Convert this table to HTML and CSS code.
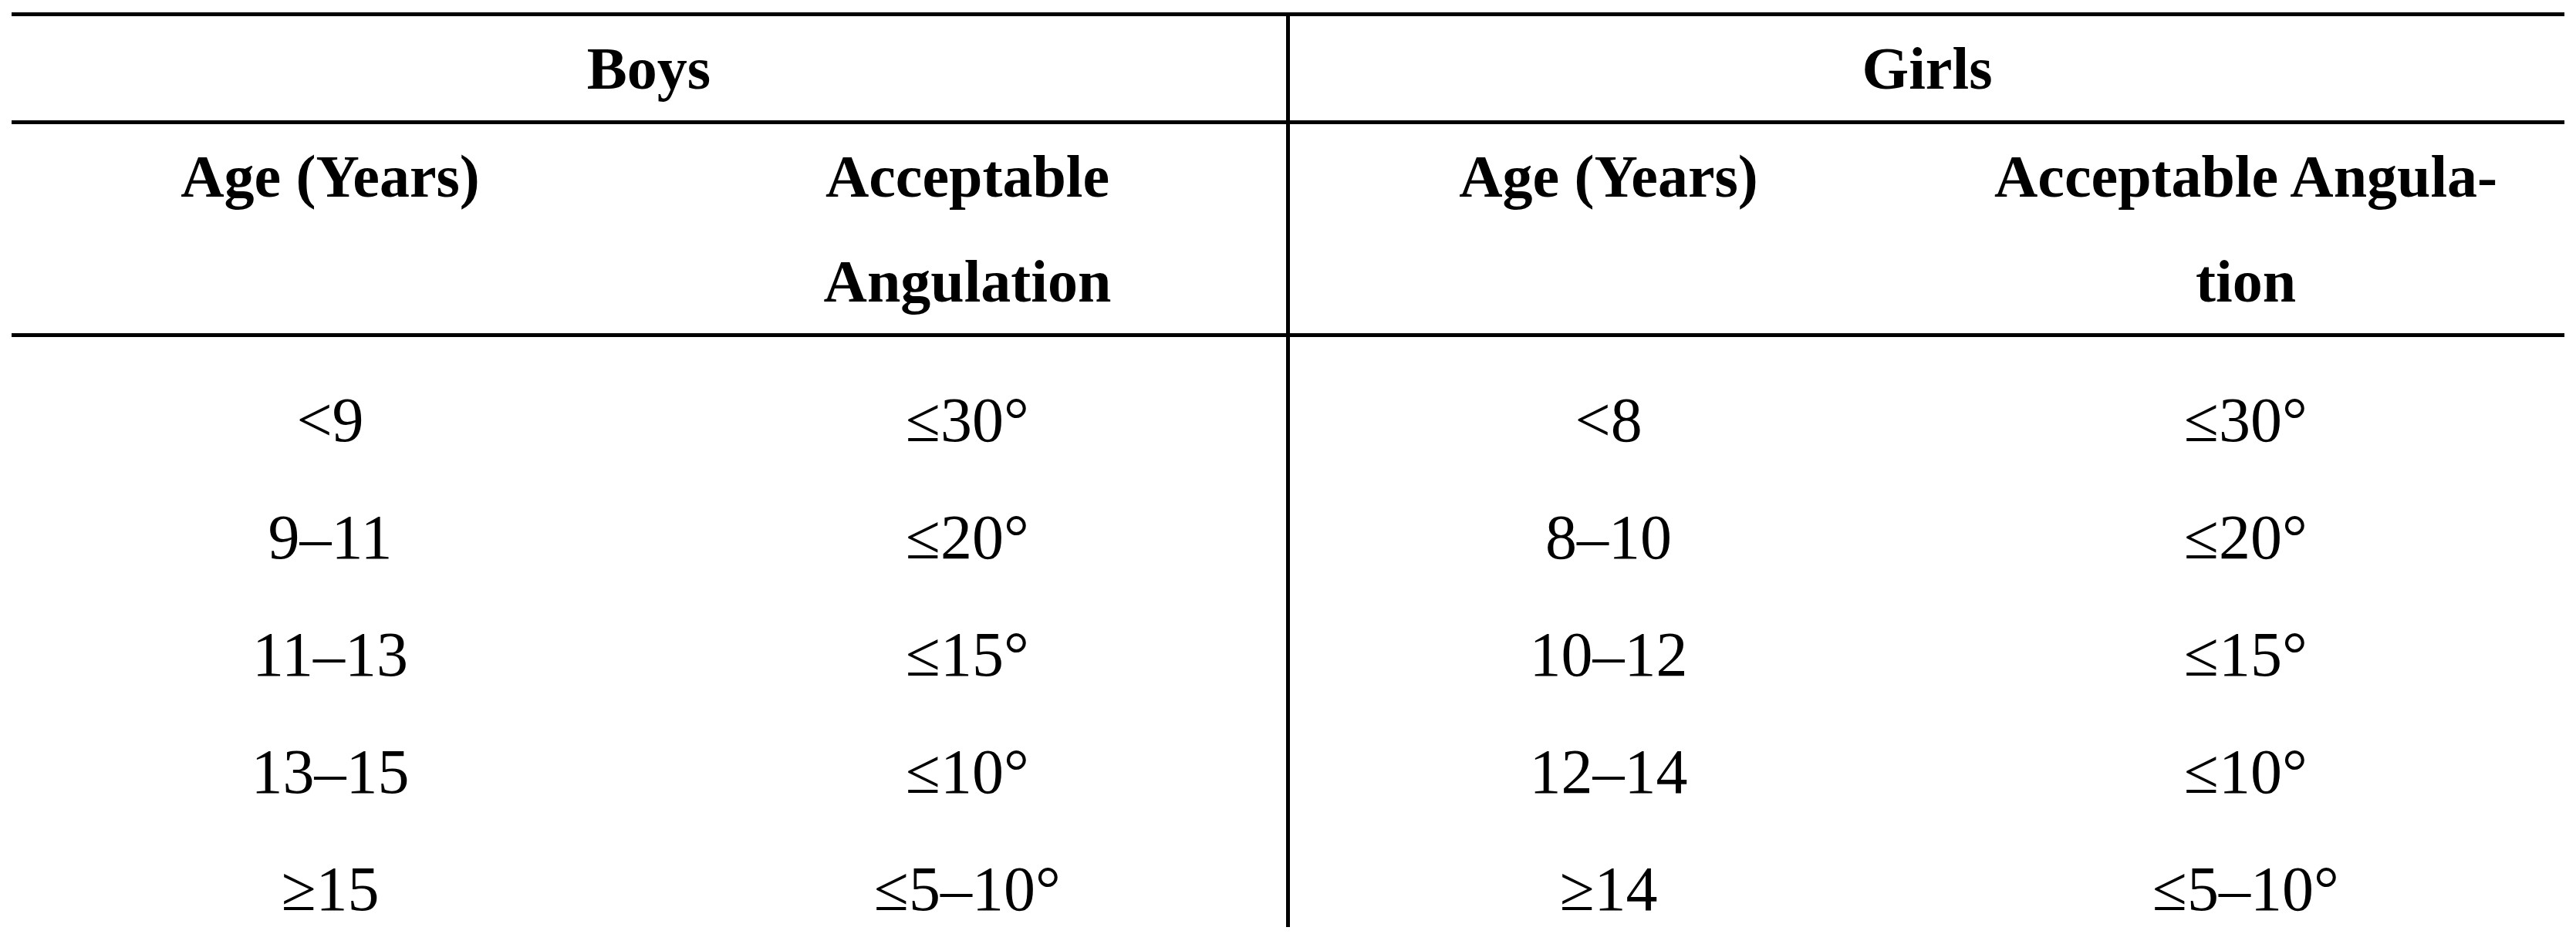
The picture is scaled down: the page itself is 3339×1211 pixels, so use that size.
FILE: index.html
```html
<!DOCTYPE html>
<html lang="en">

<head>
  <meta charset="UTF-8">
  <meta name="viewport" content="width=device-width, initial-scale=1.0">
  <title>Acceptable Angulation by Age</title>
  <link rel="stylesheet" href="styles.css">
</head>

<body>
  <div class="sheet">
    <table class="angles">
      <colgroup>
        <col class="col-age">
        <col class="col-angle">
        <col class="col-split">
        <col class="col-angle">
      </colgroup>
      <thead>
        <tr class="group-row">
          <th colspan="2">Boys</th>
          <th colspan="2" class="split">Girls</th>
        </tr>
        <tr class="label-row">
          <th>Age (Years)</th>
          <th>Acceptable<br>Angulation</th>
          <th class="split">Age (Years)</th>
          <th>Acceptable Angula-<br>tion</th>
        </tr>
      </thead>
      <tbody>
        <tr>
          <td>&lt;9</td>
          <td>≤30°</td>
          <td class="split">&lt;8</td>
          <td>≤30°</td>
        </tr>
        <tr>
          <td>9–11</td>
          <td>≤20°</td>
          <td class="split">8–10</td>
          <td>≤20°</td>
        </tr>
        <tr>
          <td>11–13</td>
          <td>≤15°</td>
          <td class="split">10–12</td>
          <td>≤15°</td>
        </tr>
        <tr>
          <td>13–15</td>
          <td>≤10°</td>
          <td class="split">12–14</td>
          <td>≤10°</td>
        </tr>
        <tr>
          <td>≥15</td>
          <td>≤5–10°</td>
          <td class="split">≥14</td>
          <td>≤5–10°</td>
        </tr>
      </tbody>
    </table>
  </div>
</body>

</html>
```

FILE: styles.css
```css
* {
  margin: 0;
  padding: 0;
  box-sizing: border-box;
}

body {
  background: #fff;
  color: #000;
}

/* the table is cropped at the bottom, like the original figure */
.sheet {
  height: 1202px;
  padding: 16px 15px 0;
  overflow: hidden;
}

.angles {
  width: 100%;
  table-layout: fixed;
  border-collapse: separate;
  border-spacing: 0;
  font-family: "Liberation Serif", "Times New Roman", serif;
}

.col-age,
.col-angle {
  width: 826px;
}

.col-split {
  width: 831px;
}

th,
td {
  text-align: center;
  vertical-align: top;
  padding: 0;
}

th {
  font-size: 78px;
  font-weight: bold;
  line-height: 135px;
}

.group-row th {
  border-top: 5px solid #000;
  border-bottom: 5px solid #000;
}

.label-row th {
  line-height: 135.5px;
  border-bottom: 5px solid #000;
}

td {
  font-size: 82px;
  line-height: 152px;
}

tbody tr:first-child td {
  padding-top: 32px;
}

.split {
  border-left: 5px solid #000;
}
```
